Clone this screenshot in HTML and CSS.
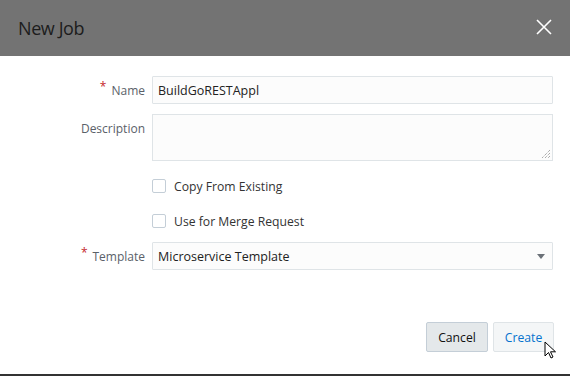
FILE: index.html
```html
<!DOCTYPE html>
<html>
<head>
<meta charset="utf-8">
<link rel="stylesheet" href="styles.css">
</head>
<body>
<div class="dialog">
  <div class="header">
    <h1 class="title">New Job</h1>
    <svg class="close" width="16" height="16" viewBox="0 0 16 16"><path d="M1 1L15 15M15 1L1 15" stroke="#fff" stroke-width="1.6" fill="none"/></svg>
  </div>
  <div class="body">
    <div class="row">
      <label class="label"><span class="req">*</span>Name</label>
      <div class="input">BuildGoRESTAppl</div>
    </div>
    <div class="row row-top">
      <label class="label label-top">Description</label>
      <div class="textarea">
        <svg class="grip" width="10" height="10" viewBox="0 0 10 10"><path d="M9 1L1 9M9 4L4 9M9 7L7 9" stroke="#888" stroke-width="1" stroke-dasharray="1 1" fill="none"/></svg>
      </div>
    </div>
    <div class="row check-row">
      <span class="label"></span>
      <div class="check"><span class="box"></span>Copy From Existing</div>
    </div>
    <div class="row check-row">
      <span class="label"></span>
      <div class="check"><span class="box"></span>Use for Merge Request</div>
    </div>
    <div class="row">
      <label class="label"><span class="req">*</span>Template</label>
      <div class="input select">Microservice Template<span class="caret"></span></div>
    </div>
  </div>
  <div class="footer">
    <button class="btn btn-cancel">Cancel</button>
    <button class="btn btn-create">Create</button>
  </div>
  <svg class="cursor" width="14" height="20" viewBox="0 0 14 20"><path d="M1 1L1 15L4.5 11.5L7 17L9 16L6.5 10.8L11.5 10.8Z" fill="#fff" stroke="#000" stroke-width="1" stroke-linejoin="miter"/></svg>
</div>
</body>
</html>
```
FILE: styles.css
```css
* { box-sizing: border-box; }
html, body { margin: 0; padding: 0; background: #fff; }
body { font-family: "Open Sans", "Noto Sans", sans-serif; font-size: 12px; color: #333; }
.dialog { position: relative; width: 570px; height: 376px; border-bottom: 2px solid #333; }
.header { height: 56px; background: #737373; display: flex; align-items: center; justify-content: space-between; padding: 0 18px 0 18px; }
.title { margin: 0; font-weight: 400; font-size: 18px; color: #1c1c1c; letter-spacing: -0.4px; }
.close { margin-right: 0; margin-top: -2px; }
.body { padding: 20px 17px 0 0; display: flex; flex-direction: column; }
.row { display: flex; align-items: center; }
.row-top { align-items: flex-start; margin-top: 10px; }
.label { width: 152px; flex: none; text-align: right; padding-right: 7px; color: #5a6169; font-size: 12px; }
.label-top { padding-top: 6px; }
.req { color: #c5262b; font-size: 12px; margin-right: 5px; position: relative; top: -4px; }
.input { flex: 1; height: 28px; border: 1px solid #dfe4e7; background: #fcfcfc; border-radius: 1px; padding: 0 5px; display: flex; align-items: center; font-size: 12.5px; color: #222; }
.textarea { flex: 1; height: 47px; border: 1px solid #dfe4e7; background: #fcfcfc; position: relative; }
.grip { position: absolute; right: 1px; bottom: 1px; }
.check-row { margin-top: 17px; height: 16px; }
.check-row + .check-row { margin-top: 19px; }
.check { display: flex; align-items: center; font-size: 12.2px; color: #333; }
.box { width: 14px; height: 14px; border: 1px solid #c4ced7; border-radius: 2px; background: #fff; margin-right: 8px; }
.row:last-child { margin-top: 13px; }
.select { position: relative; justify-content: space-between; }
.caret { width: 0; height: 0; border-left: 4px solid transparent; border-right: 4px solid transparent; border-top: 5px solid #6b7178; margin-right: 2px; }
.footer { position: absolute; right: 16px; bottom: 22px; display: flex; gap: 5px; }
.btn { height: 30px; font-family: "Open Sans", "Noto Sans", sans-serif; font-size: 12.2px; border: 1px solid #c4ced7; border-radius: 2px; padding: 0; }
.btn-cancel { width: 62px; background: #e4e8ea; color: #111; }
.btn-create { width: 61px; background: #f4f6f7; color: #0572ce; border-color: #dfe4e7; }
.cursor { position: absolute; left: 544px; top: 341px; }
```
